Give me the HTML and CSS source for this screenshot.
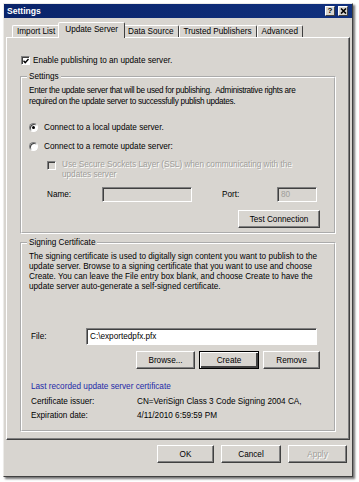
FILE: index.html
```html
<!DOCTYPE html>
<html>
<head>
<meta charset="utf-8">
<title>Settings</title>
<link rel="stylesheet" href="styles.css">
</head>
<body>
<div class="frame">
  <div class="dialog">
    <div class="titlebar">
      <span class="title">Settings</span>
      <span class="tbtn help">?</span>
      <span class="tbtn close"><svg width="7" height="6" viewBox="0 0 7 6"><path d="M1 0.5 L6 5.5 M6 0.5 L1 5.5" stroke="#000" stroke-width="1.6"/></svg></span>
    </div>
    <div class="tabs">
      <div class="tab">Import List</div>
      <div class="tab active">Update Server</div>
      <div class="tab">Data Source</div>
      <div class="tab">Trusted Publishers</div>
      <div class="tab">Advanced</div>
    </div>
    <div class="panel">
      <div class="check-row">
        <span class="cb"><svg width="6" height="6" viewBox="0 0 6 6"><path d="M0.5 2.8 L2.2 4.6 L5.5 1" stroke="#000" stroke-width="1.4" fill="none"/></svg></span>
        <span>Enable publishing to an update server.</span>
      </div>

      <fieldset class="group settings">
        <legend>Settings</legend>
        <p class="desc">Enter the update server that will be used for publishing.&nbsp; Administrative rights are<br>required on the update server to successfully publish updates.</p>
        <div class="radio-row first">
          <span class="radio on"><span class="dot"></span></span>
          <span>Connect to a local update server.</span>
        </div>
        <div class="radio-row">
          <span class="radio"></span>
          <span>Connect to a remote update server:</span>
        </div>
        <div class="ssl-row">
          <span class="cb disabled"></span>
          <span class="disabled-text">Use Secure Sockets Layer (SSL) when communicating with the<br>updates server</span>
        </div>
        <div class="server-row">
          <span class="lbl name-lbl">Name:</span>
          <span class="field off name-field"></span>
          <span class="lbl port-lbl">Port:</span>
          <span class="field off port-field">80</span>
        </div>
        <div class="btn-row">
          <button class="btn test">Test Connection</button>
        </div>
      </fieldset>

      <fieldset class="group signing">
        <legend>Signing Certificate</legend>
        <p class="desc">The signing certificate is used to digitally sign content you want to publish to the<br>update server. Browse to a signing certificate that you want to use and choose<br>Create. You can leave the File entry box blank, and choose Create to have the<br>update server auto-generate a self-signed certificate.</p>
        <div class="file-row">
          <span class="lbl file-lbl">File:</span>
          <span class="field file-field">C:\exportedpfx.pfx</span>
        </div>
        <div class="btn-row cert-btns">
          <button class="btn browse">Browse...</button>
          <button class="btn default create">Create</button>
          <button class="btn remove">Remove</button>
        </div>
        <div class="last">Last recorded update server certificate</div>
        <div class="info-row first-info"><span class="info-lbl">Certificate issuer:</span><span>CN=VeriSign Class 3 Code Signing 2004 CA,</span></div>
        <div class="info-row"><span class="info-lbl">Expiration date:</span><span>4/11/2010 6:59:59 PM</span></div>
      </fieldset>
    </div>
    <div class="footer">
      <button class="btn ok">OK</button>
      <button class="btn cancel">Cancel</button>
      <button class="btn apply" disabled>Apply</button>
    </div>
  </div>
</div>
</body>
</html>
```

FILE: styles.css
```css
* { box-sizing: border-box; }
html, body { margin: 0; padding: 0; background: #fff; }
body {
  width: 359px;
  height: 482px;
  overflow: hidden;
  font-family: "Liberation Sans", Arial, sans-serif;
  font-size: 8.2px;
  color: #000;
}
.frame { padding: 3px 0 0 3px; }
.dialog {
  width: 350px;
  height: 474px;
  background: #d8d5d0;
  border: 1px solid;
  border-color: #ecebe8 #404040 #404040 #ecebe8;
  box-shadow: 2px 2px 2px rgba(0, 0, 0, 0.55);
}
.titlebar {
  height: 14px;
  display: flex;
  align-items: center;
  padding: 0 4px 0 3px;
  background: linear-gradient(to right, #0a246a, #10307e);
  gap: 2px;
}
.title {
  flex: 1;
  color: #fff;
  font-weight: bold;
  font-size: 8.6px;
}
.tbtn {
  width: 10px;
  height: 10px;
  background: #d8d5d0;
  border: 1px solid;
  border-color: #fff #404040 #404040 #fff;
  display: flex;
  align-items: center;
  justify-content: center;
  font-weight: bold;
  font-size: 8px;
  line-height: 8px;
}
.tbtn.close { margin-left: 1px; }

.tabs {
  display: flex;
  align-items: flex-end;
  height: 19px;
  padding-left: 8px;
}
.tab {
  height: 12px;
  line-height: 11px;
  padding: 0 4px;
  border: 1px solid;
  border-bottom: none;
  border-color: #fff #404040 transparent #fff;
  border-radius: 2px 2px 0 0;
  white-space: nowrap;
}
.tab.active {
  height: 16px;
  line-height: 13px;
  margin: 0 -2px -1px;
  padding: 0 6px;
  background: #d8d5d0;
  position: relative;
  z-index: 1;
}

.panel {
  margin: 0 2px 0 2px;
  height: 403px;
  border: 1px solid;
  border-color: #fff #404040 #404040 #fff;
  box-shadow: inset -1px -1px 0 #808080;
  padding: 17px 13px 0 13px;
}
.check-row {
  display: flex;
  align-items: center;
  height: 10px;
  gap: 3px;
  padding-left: 1px;
}
.cb {
  width: 9px;
  height: 9px;
  background: #fff;
  border: 1px solid;
  border-color: #808080 #fff #fff #808080;
  box-shadow: inset 1px 1px 0 #404040;
  display: inline-flex;
  align-items: center;
  justify-content: center;
  flex: none;
}
.cb svg { margin: 1px 0 0 1px; }
.cb.disabled { background: #d8d5d0; }

.group {
  margin: 7px 0 0;
  border: 2px groove #fff;
  padding: 0 14px 4px 7px;
  min-width: 0;
}
.group legend {
  line-height: 10px;
  padding: 0 2px;
  margin-left: -2px;
}
.desc {
  margin: 0;
  white-space: nowrap;
}
.settings .desc { padding-top: 3px; line-height: 11px; letter-spacing: -0.3px; }
.radio-row {
  display: flex;
  align-items: center;
  height: 12px;
  gap: 6px;
  margin-top: 7px;
}
.radio-row.first { margin-top: 14px; }
.radio {
  width: 9px;
  height: 9px;
  border-radius: 50%;
  background: #fff;
  border: 1px solid;
  border-color: #808080 #fff #fff #808080;
  box-shadow: inset 1px 1px 0 #404040;
  display: inline-flex;
  align-items: center;
  justify-content: center;
  flex: none;
}
.dot {
  width: 3px;
  height: 3px;
  border-radius: 50%;
  background: #000;
}
.ssl-row {
  display: flex;
  align-items: flex-start;
  margin-top: 8px;
  padding-left: 18px;
  gap: 6px;
  line-height: 10px;
}
.ssl-row .cb { margin-top: 1px; }
.disabled-text {
  color: #a09e9a;
  text-shadow: 1px 1px 0 #fff;
  white-space: nowrap;
}
.server-row {
  display: flex;
  align-items: center;
  height: 15px;
  margin-top: 7px;
  padding-left: 18px;
}
.lbl { flex: none; }
.name-lbl { width: 55px; }
.port-lbl { width: 55px; margin-left: 30px; }
.field {
  height: 15px;
  border: 1px solid;
  border-color: #808080 #fff #fff #808080;
  box-shadow: inset 1px 1px 0 #404040;
  background: #fff;
  padding: 2px 3px;
  line-height: 10px;
  white-space: nowrap;
  flex: none;
}
.field.off { background: #d8d5d0; color: #a09e9a; }
.name-field { width: 90px; }
.port-field { width: 40px; }
.btn-row {
  display: flex;
  justify-content: flex-end;
  margin-top: 8px;
  gap: 4px;
}
.btn {
  font: inherit;
  color: #000;
  height: 18px;
  padding: 0;
  background: #d8d5d0;
  border: 1px solid;
  border-color: #fff #404040 #404040 #fff;
  box-shadow: inset -1px -1px 0 #808080;
  flex: none;
}
.btn.default {
  border-color: #000;
  box-shadow: inset 1px 1px 0 #fff, inset -2px -2px 0 #404040;
}
.btn:disabled { color: #a09e9a; text-shadow: 1px 1px 0 #fff; }
.test { width: 82px; }

.signing { margin-top: 4px; padding-bottom: 8px; }
.signing .desc { padding-top: 4px; line-height: 10px; }
.file-row {
  display: flex;
  align-items: center;
  margin-top: 36px;
  padding-left: 2px;
}
.file-lbl { width: 55px; }
.file-field { width: 231px; height: 17px; padding-top: 3px; }
.cert-btns { margin-top: 6px; gap: 4px; }
.browse { width: 59px; }
.create { width: 60px; }
.remove { width: 57px; }
.last {
  margin-top: 13px;
  line-height: 10px;
  color: #1c2aa8;
  padding-left: 2px;
}
.info-row {
  display: flex;
  align-items: center;
  height: 14px;
  padding-left: 2px;
  white-space: nowrap;
}
.first-info { margin-top: 2px; }
.info-lbl { width: 106px; flex: none; }

.footer {
  display: flex;
  justify-content: flex-end;
  gap: 7px;
  margin-top: 5px;
  padding-right: 5px;
}
.ok { width: 57px; }
.cancel { width: 60px; }
.apply { width: 59px; }
```
